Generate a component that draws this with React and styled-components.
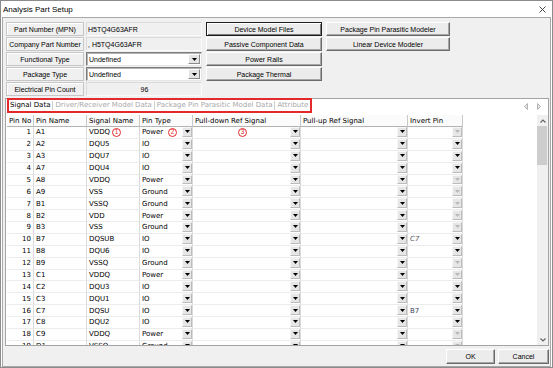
import React from "react";
import styled, { createGlobalStyle, css } from "styled-components";

const GlobalStyle = createGlobalStyle`
  html, body { margin: 0; padding: 0; background: #fff; }
  * { box-sizing: border-box; }
`;

const fields = [
    {label: "Part Number (MPN)", value: "H5TQ4G63AFR"},
    {label: "Company Part Number", value: ", H5TQ4G63AFR"},
    {label: "Functional Type", value: "Undefined", combo: true},
    {label: "Package Type", value: "Undefined", combo: true},
    {label: "Electrical Pin Count", value: "96", center: true},
];

const buttons = [
    ["Device Model Files", "Package Pin Parasitic Modeler"],
    ["Passive Component Data", "Linear Device Modeler"],
    ["Power Rails"],
    ["Package Thermal"],
];

const tabs = ["Signal Data", "Driver/Receiver Model Data", "Package Pin Parasitic Model Data", "Attribute"];

const columns = ["Pin No", "Pin Name", "Signal Name", "Pin Type", "Pull-down Ref Signal", "Pull-up Ref Signal", "Invert Pin"];

const pins = [
    ["1", "A1", "VDDQ", "Power"],
    ["2", "A2", "DQU5", "IO"],
    ["3", "A3", "DQU7", "IO"],
    ["4", "A7", "DQU4", "IO"],
    ["5", "A8", "VDDQ", "Power"],
    ["6", "A9", "VSS", "Ground"],
    ["7", "B1", "VSSQ", "Ground"],
    ["8", "B2", "VDD", "Power"],
    ["9", "B3", "VSS", "Ground"],
    ["10", "B7", "DQSUB", "IO", "C7"],
    ["11", "B8", "DQU6", "IO"],
    ["12", "B9", "VSSQ", "Ground"],
    ["13", "C1", "VDDQ", "Power"],
    ["14", "C2", "DQU3", "IO"],
    ["15", "C3", "DQU1", "IO"],
    ["16", "C7", "DQSU", "IO", "B7"],
    ["17", "C8", "DQU2", "IO"],
    ["18", "C9", "VDDQ", "Power"],
    ["19", "D1", "VSSQ", "Ground"],
];

const COLS = "27px 53px 53px 53px 108px 107px 55px";
const RED = "#e3292b";

const Window = styled.div`
  width: 553px;
  height: 368px;
  border: 1px solid #8c8c8c;
  background: #fff;
  display: flex;
  flex-direction: column;
  overflow: hidden;
  font-family: "Liberation Sans", Arial, sans-serif;
  color: #000;
`;

const TitleBar = styled.div`
  height: 16px;
  flex: none;
  display: flex;
  align-items: center;
  justify-content: space-between;
  padding: 0 6px 0 2px;
  font-size: 8px;
`;

const Body = styled.div`
  flex: 1;
  margin: 0 1px;
  background: #f0f0f0;
  border: 1px solid #a8a8a8;
  display: flex;
  flex-direction: column;
  padding: 4px 1px 0 2px;
`;

const TopSection = styled.div`
  display: flex;
  gap: 4px;
  margin-left: 1px;
  flex: none;
`;

const FieldGrid = styled.div`
  display: grid;
  grid-template-columns: 78px 116px;
  grid-auto-rows: 14px;
  gap: 1px 2px;
`;

const Label = styled.div`
  display: flex;
  align-items: center;
  justify-content: center;
  font-size: 7px;
  border: 1px solid #c6c6c6;
  box-shadow: inset 1px 1px 0 #fff;
  white-space: nowrap;
`;

const StaticValue = styled.div`
  display: flex;
  align-items: center;
  justify-content: ${p => p.$center ? "center" : "flex-start"};
  padding-left: 1px;
  font-size: 7px;
  border: 1px solid;
  border-color: #dadada #fafafa #fafafa #dadada;
`;

const Combo = styled.div`
  display: flex;
  align-items: stretch;
  background: #fff;
  border: 1px solid;
  border-color: #7d7d7d #e6e6e6 #e6e6e6 #7d7d7d;
  box-shadow: inset 1px 1px 0 #b4b4b4;
  font-size: 7px;
`;

const ComboText = styled.span`
  flex: 1;
  display: flex;
  align-items: center;
  padding-left: 2px;
`;

const ComboButton = styled.span`
  width: 12px;
  margin: 1px 1px 1px 0;
  background: #e4e4e4;
  border: 1px solid;
  border-color: #fff #8a8a8a #8a8a8a #fff;
  display: flex;
  align-items: center;
  justify-content: center;
`;

const ButtonGrid = styled.div`
  display: grid;
  grid-template-columns: 116px 124px;
  grid-auto-rows: 14px;
  gap: 1px 4px;
`;

const Button = styled.button`
  height: 14px;
  margin: 0;
  padding: 0;
  font-family: "Liberation Sans", Arial, sans-serif;
  font-size: 7px;
  color: #000;
  background: #ececec;
  border: 1px solid;
  border-color: #fff #6b6b6b #6b6b6b #fff;
  box-shadow: inset -1px -1px 0 #a6a6a6;
  white-space: nowrap;
  ${p => p.$default && css`
    border-color: #1e1e1e;
    box-shadow: inset 1px 1px 0 #fff, inset -1px -1px 0 #7a7a7a;
  `}
`;

const FooterButton = styled(Button)`
  width: ${p => p.$w}px;
  height: 15px;
`;

const TabBox = styled.div`
  margin-top: 2px;
  width: 544px;
  height: 248px;
  flex: none;
  border: 1px solid #a3a3a3;
  background: #fff;
  display: flex;
  flex-direction: column;
`;

const TabStrip = styled.div`
  height: 16px;
  flex: none;
  display: flex;
  align-items: flex-start;
  padding-left: 1px;
  font-family: "DejaVu Sans", Verdana, sans-serif;
  font-size: 7px;
`;

const Highlight = styled.div`
  height: 15px;
  margin-top: -1px;
  display: flex;
  align-items: center;
  border: 2px solid ${RED};
`;

const Tab = styled.span`
  padding: 0 2px 0 1px;
  line-height: 9px;
  color: ${p => p.$active ? "#000" : "#a9a9a9"};
  & + & {
    border-left: 1px solid #cfcfcf;
    padding-left: 2px;
  }
`;

const TabArrows = styled.div`
  margin-left: auto;
  height: 15px;
  display: flex;
  align-items: center;
  gap: 9px;
  padding-right: 7px;
`;

const GridArea = styled.div`
  flex: 1;
  display: flex;
  min-height: 0;
  overflow: hidden;
`;

const Table = styled.div`
  width: 457px;
  flex: none;
  padding-left: 1px;
  display: flex;
  flex-direction: column;
  font-family: "DejaVu Sans", Verdana, sans-serif;
  font-size: 7px;
  overflow: hidden;
`;

const HeaderRow = styled.div`
  height: 12px;
  flex: none;
  display: grid;
  grid-template-columns: ${COLS};
`;

const HeaderCell = styled.div`
  display: flex;
  align-items: center;
  padding-left: 2px;
  white-space: nowrap;
  background: #fbfbfb;
  border-right: 1px solid #c9c9c9;
  border-bottom: 1px solid #b3b3b3;
`;

const DataRow = styled.div`
  height: 11.875px;
  flex: none;
  display: grid;
  grid-template-columns: ${COLS};
`;

const Cell = styled.div`
  display: flex;
  align-items: center;
  justify-content: ${p => p.$right ? "flex-end" : "flex-start"};
  padding: ${p => p.$right ? "0 2px 0 0" : "0 0 0 2px"};
  white-space: nowrap;
  overflow: hidden;
  border-right: 1px solid #dadada;
  border-bottom: 1px solid #ececec;
`;

const CellCombo = styled(Cell)`
  padding: 0 0 0 2px;
  align-items: stretch;
`;

const CellText = styled.span`
  flex: 1;
  display: flex;
  align-items: center;
  justify-content: ${p => p.$center ? "center" : "flex-start"};
  font-style: ${p => p.$italic ? "italic" : "normal"};
  color: ${p => p.$tone || "#000"};
`;

const CellButton = styled.span`
  width: 10px;
  flex: none;
  margin-bottom: 1px;
  background: #e6e6e6;
  border: 1px solid;
  border-color: #f7f7f7 #bcbcbc #bcbcbc #f7f7f7;
  display: flex;
  align-items: center;
  justify-content: center;
`;

const Marker = styled.span`
  width: 9px;
  height: 9px;
  margin-left: ${p => p.$gap || 0}px;
  border: 1px solid ${RED};
  border-radius: 50%;
  color: ${RED};
  font-family: "Liberation Sans", Arial, sans-serif;
  font-size: 6.5px;
  line-height: 1;
  display: inline-flex;
  align-items: center;
  justify-content: center;
`;

const Filler = styled.div`
  flex: 1;
  background: #fff;
`;

const ScrollBar = styled.div`
  width: 11px;
  flex: none;
  background: #f0f0f0;
  display: flex;
  flex-direction: column;
`;

const ScrollArrow = styled.div`
  height: 11px;
  flex: none;
  display: flex;
  align-items: center;
  justify-content: center;
`;

const Thumb = styled.div`
  height: 39px;
  margin: 0 1px 0 0;
  background: #cdcdcd;
  flex: none;
`;

const Track = styled.div`
  flex: 1;
`;

const Footer = styled.div`
  flex: 1;
  display: flex;
  justify-content: flex-end;
  align-items: flex-start;
  gap: 3px;
  padding-top: 3px;
`;

const Arrow = ({color = "#000"}) => (
    <svg width="5" height="3" viewBox="0 0 5 3">
        <polygon points="0,0 5,0 2.5,3" fill={color}/>
    </svg>
);

const Chevron = ({up}) => (
    <svg width="6" height="4" viewBox="0 0 6 4">
        <polyline points={up ? "0.5,3.5 3,1 5.5,3.5" : "0.5,0.5 3,3 5.5,0.5"} fill="none" stroke="#606060" strokeWidth="1.1"/>
    </svg>
);

const TabArrow = ({left}) => (
    <svg width="4" height="7" viewBox="0 0 4 7">
        <polygon points={left ? "3.5,0.5 0.5,3.5 3.5,6.5" : "0.5,0.5 3.5,3.5 0.5,6.5"} fill="#e2e2e2" stroke="#a6a6a6" strokeWidth="0.8"/>
    </svg>
);

const CloseIcon = () => (
    <svg width="7" height="7" viewBox="0 0 7 7">
        <path d="M0.5 0.5 L6.5 6.5 M6.5 0.5 L0.5 6.5" stroke="#333" strokeWidth="0.9"/>
    </svg>
);

const ComboCellView = ({children, center, italic, tone, disabled}) => (
    <CellCombo>
        <CellText $center={center} $italic={italic} $tone={tone}>{children}</CellText>
        <CellButton><Arrow color={disabled ? "#b8b8b8" : "#000"}/></CellButton>
    </CellCombo>
);

const PinRow = ({pin}) => {
    const [no, name, signal, type, invert] = pin;
    const first = no === "1";
    return (
        <DataRow>
            <Cell $right>{no}</Cell>
            <Cell>{name}</Cell>
            <Cell>{signal}{first && <Marker $gap={2}>1</Marker>}</Cell>
            <ComboCellView>{type}{first && <Marker $gap={5}>2</Marker>}</ComboCellView>
            <ComboCellView center>{first && <Marker>3</Marker>}</ComboCellView>
            <ComboCellView/>
            <ComboCellView italic={invert === "C7"} tone={invert === "C7" ? "#555" : "#3a3f5c"} disabled={type !== "IO"}>
                {invert}
            </ComboCellView>
        </DataRow>
    )
}

const App = () => {
    return (
        <>
            <GlobalStyle/>
            <Window>
                <TitleBar>
                    <span>Analysis Part Setup</span>
                    <CloseIcon/>
                </TitleBar>
                <Body>
                    <TopSection>
                        <FieldGrid>
                            {fields.map((field) => (
                                <React.Fragment key={field.label}>
                                    <Label>{field.label}</Label>
                                    {field.combo ? (
                                        <Combo>
                                            <ComboText>{field.value}</ComboText>
                                            <ComboButton><Arrow/></ComboButton>
                                        </Combo>
                                    ) : (
                                        <StaticValue $center={field.center}>{field.value}</StaticValue>
                                    )}
                                </React.Fragment>
                            ))}
                        </FieldGrid>
                        <ButtonGrid>
                            {buttons.map((row) => (
                                <React.Fragment key={row[0]}>
                                    <Button $default={row[0] === "Device Model Files"}>{row[0]}</Button>
                                    {row[1] ? <Button>{row[1]}</Button> : <span/>}
                                </React.Fragment>
                            ))}
                        </ButtonGrid>
                    </TopSection>
                    <TabBox>
                        <TabStrip>
                            <Highlight>
                                {tabs.map((tab, i) => <Tab key={tab} $active={i === 0}>{tab}</Tab>)}
                            </Highlight>
                            <TabArrows>
                                <TabArrow left/>
                                <TabArrow/>
                            </TabArrows>
                        </TabStrip>
                        <GridArea>
                            <Table>
                                <HeaderRow>
                                    {columns.map((col) => <HeaderCell key={col}>{col}</HeaderCell>)}
                                </HeaderRow>
                                {pins.map((pin) => <PinRow key={pin[0]} pin={pin}/>)}
                            </Table>
                            <Filler/>
                            <ScrollBar>
                                <ScrollArrow><Chevron up/></ScrollArrow>
                                <Thumb/>
                                <Track/>
                                <ScrollArrow><Chevron/></ScrollArrow>
                            </ScrollBar>
                        </GridArea>
                    </TabBox>
                    <Footer>
                        <FooterButton $w={49}>OK</FooterButton>
                        <FooterButton $w={51}>Cancel</FooterButton>
                    </Footer>
                </Body>
            </Window>
        </>
    )
}

export default App
